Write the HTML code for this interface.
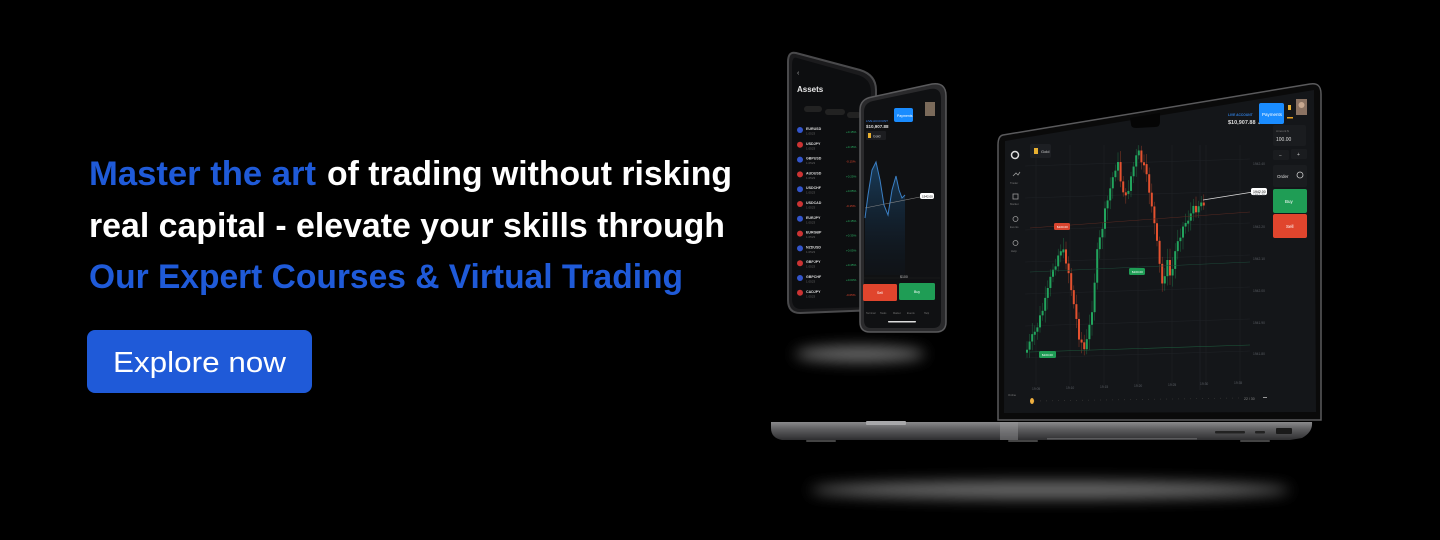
<!DOCTYPE html>
<html><head><meta charset="utf-8"><style>
html,body{margin:0;padding:0;background:#000;}
body{width:1440px;height:540px;overflow:hidden;}
svg{display:block}
</style></head><body>
<svg id="s" width="1440" height="540" viewBox="0 0 1440 540" xmlns="http://www.w3.org/2000/svg" font-family="Liberation Sans, sans-serif">
<defs>
<filter id="bl" x="-50%" y="-200%" width="200%" height="500%"><feGaussianBlur stdDeviation="7"/></filter>
<linearGradient id="base" x1="0" y1="0" x2="0" y2="1"><stop offset="0" stop-color="#8a8a8c"/><stop offset="0.4" stop-color="#5e5e60"/><stop offset="1" stop-color="#2e2e30"/></linearGradient>
<linearGradient id="area" x1="0" y1="0" x2="0" y2="1"><stop offset="0" stop-color="#1d4f7a" stop-opacity="0.7"/><stop offset="1" stop-color="#0f1a26" stop-opacity="0.2"/></linearGradient>
</defs>
<rect width="1440" height="540" fill="#000"/>

<g font-weight="bold" font-size="34">
<text x="89" y="185" fill="#1f5ad8" textLength="227" lengthAdjust="spacingAndGlyphs">Master the art</text>
<text x="327" y="185" fill="#fff" textLength="405" lengthAdjust="spacingAndGlyphs">of trading without risking</text>
<text x="89" y="237" fill="#fff" textLength="636" lengthAdjust="spacingAndGlyphs">real capital - elevate your skills through</text>
<text x="89" y="288" fill="#1f5ad8" textLength="594" lengthAdjust="spacingAndGlyphs">Our Expert Courses &amp; Virtual Trading</text>
</g>
<rect x="87" y="330" width="225" height="63" rx="8" fill="#1f5ad8"/>
<text x="113" y="372" fill="#fff" font-size="29" textLength="173" lengthAdjust="spacingAndGlyphs">Explore now</text>

<ellipse cx="860" cy="354" rx="65" ry="8" fill="#6a6a6a" filter="url(#bl)"/>
<ellipse cx="1050" cy="490" rx="240" ry="9" fill="#6a6a6a" filter="url(#bl)"/>

<!-- phone 1 -->
<path d="M796,53 L860,70 Q876,75 876,90 L876,310 L800,313 Q788,313 788,300 L788,62 Q788,51 796,53 Z" fill="#1b1b1d" stroke="#4a4a4c" stroke-width="2"/>
<path d="M797,58 L858,75 Q871,79 871,92 L871,307 L801,309 Q792,309 792,299 L792,66 Q792,56 797,58 Z" fill="#0d0e10"/>
<text x="797" y="92" fill="#e8e8e8" font-size="8" font-weight="bold">Assets</text>
<text x="797" y="75" fill="#aaa" font-size="7">‹</text>
<g font-size="4" fill="#aaa">
<rect x="804" y="106" width="18" height="6" rx="3" fill="#222"/><rect x="825" y="109" width="20" height="6" rx="3" fill="#222"/><rect x="847" y="112" width="14" height="6" rx="3" fill="#222"/>
</g>
<g id="rows"></g>

<!-- phone 2 -->
<path d="M872,97 L932,84 Q946,82 946,96 L946,322 Q946,332 936,332 L870,332 Q860,332 860,322 L860,110 Q860,99 872,97 Z" fill="#2a2a2c" stroke="#5a5a5c" stroke-width="1.5"/>
<path d="M873,101 L930,89 Q941,87 941,99 L941,320 Q941,328 933,328 L871,328 Q864,328 864,320 L864,112 Q864,103 873,101 Z" fill="#101113"/>
<rect x="894" y="108" width="19" height="14" rx="2" fill="#1a8cff"/>
<text x="897" y="117" fill="#fff" font-size="3.5">Payments</text>
<rect x="925" y="102" width="10" height="14" fill="#7a6a5a"/>
<text x="866" y="122" fill="#3a8cff" font-size="3">LIVE ACCOUNT</text>
<text x="866" y="128" fill="#ddd" font-size="4.5" font-weight="bold">$10,907.88</text>
<rect x="866" y="131" width="20" height="9" rx="1" fill="#1c1d20"/>
<rect x="868" y="133" width="3" height="5" fill="#e8b030"/>
<text x="873" y="137.5" fill="#ccc" font-size="3.5">Gold</text>
<path d="M865,218 L868,195 L872,170 L876,162 L880,180 L884,205 L888,215 L892,190 L896,176 L899,190 L902,198 L905,195 L905,275 L865,275 Z" fill="url(#area)"/>
<path d="M865,218 L868,195 L872,170 L876,162 L880,180 L884,205 L888,215 L892,190 L896,176 L899,190 L902,198 L905,195" fill="none" stroke="#3b7fc4" stroke-width="1"/>
<line x1="865" y1="208" x2="920" y2="197" stroke="#888" stroke-width="0.6"/>
<rect x="920" y="193" width="14" height="6" rx="2" fill="#fff"/>
<text x="922" y="197.5" fill="#000" font-size="3">1942.00</text>
<line x1="864" y1="278" x2="940" y2="278" stroke="#222" stroke-width="0.6"/>
<text x="900" y="278" fill="#bbb" font-size="3.5">$100</text>
<rect x="863" y="284" width="34" height="17" rx="1.5" fill="#e0452d"/>
<rect x="899" y="283" width="36" height="17" rx="1.5" fill="#1f9d55"/>
<text x="877" y="294" fill="#fff" font-size="3.5">Sell</text>
<text x="914" y="293" fill="#fff" font-size="3.5">Buy</text>
<rect x="888" y="321" width="28" height="1.5" rx="0.7" fill="#ddd"/>
<g fill="#777" font-size="2.5"><text x="866" y="314">Terminal</text><text x="880" y="314">Tasks</text><text x="893" y="314">Market</text><text x="907" y="314">Events</text><text x="924" y="314">Help</text></g>

<!-- laptop lid -->
<path d="M1003,135 L1310,84 Q1321,82 1321,94 L1321,420 L998,420 L998,145 Q998,136 1003,135 Z" fill="#0a0a0a" stroke="#5a5a5c" stroke-width="1.5"/>
<path d="M1005,141 L1314,90 L1316,412 L1004,413 Z" fill="#141619"/>
<path d="M1130,118 L1160,113 L1160,122 Q1160,127 1155,127 L1136,128 Q1131,128 1131,124 Z" fill="#050505"/>
<g id="grid" stroke="#1f2226" stroke-width="0.6"></g>
<line x1="1200" y1="145" x2="1200" y2="390" stroke="#22262a" stroke-width="0.6"/>
<g id="candles"></g>
<line x1="1030" y1="352" x2="1250" y2="345" stroke="#1d5a3c" stroke-width="0.6"/>
<line x1="1030" y1="228" x2="1250" y2="212" stroke="#5a2a22" stroke-width="0.5"/>
<line x1="1030" y1="272" x2="1250" y2="262" stroke="#1d4a3a" stroke-width="0.5"/>
<line x1="1203" y1="200" x2="1253" y2="192" stroke="#ddd" stroke-width="0.8"/>
<rect x="1251" y="188" width="16" height="7" rx="2" fill="#fff"/>
<text x="1253" y="193" fill="#000" font-size="3.5">1942.00</text>
<rect x="1054" y="223" width="16" height="7" rx="1.5" fill="#d9452f"/>
<rect x="1129" y="268" width="16" height="7" rx="1.5" fill="#1f9d55"/>
<rect x="1039" y="351" width="17" height="7" rx="1.5" fill="#1f9d55"/>
<g fill="#fff" font-size="3"><text x="1057" y="228">$100.00</text><text x="1132" y="273">$100.00</text><text x="1042" y="356">$100.00</text></g>
<g fill="#5a5e64" font-size="3.3"><text x="1253" y="165">1942.40</text><text x="1253" y="196">1942.30</text><text x="1253" y="228">1942.20</text><text x="1253" y="260">1942.10</text><text x="1253" y="292">1942.00</text><text x="1253" y="324">1941.90</text><text x="1253" y="355">1941.80</text>
<text x="1032" y="390">19:05</text><text x="1066" y="389">19:10</text><text x="1100" y="388">19:15</text><text x="1134" y="387">19:20</text><text x="1168" y="386">19:25</text><text x="1200" y="385">19:30</text><text x="1234" y="384">19:35</text></g>
<line x1="1034" y1="401" x2="1240" y2="398" stroke="#333" stroke-width="0.8" stroke-dasharray="1 5"/>
<ellipse cx="1032" cy="401" rx="2" ry="3" fill="#f0b040"/>
<text x="1244" y="400" fill="#888" font-size="3.5">22 / 30</text>
<rect x="1263" y="397" width="4" height="1" fill="#999"/>
<circle cx="1015" cy="155" r="3.5" fill="none" stroke="#ddd" stroke-width="1.5"/>
<g fill="#777" font-size="2.8"><text x="1010" y="184">Trader</text><text x="1010" y="205">Market</text><text x="1010" y="228">Events</text><text x="1011" y="252">Help</text><text x="1008" y="396">Online</text></g>
<g fill="none" stroke="#999" stroke-width="0.8"><rect x="1013" y="194" width="5" height="5"/><circle cx="1015.5" cy="219" r="2.5"/><circle cx="1015.5" cy="243" r="2.5"/><path d="M1013,176 l3,-3 l2,2 l2,-3"/></g>
<rect x="1030" y="144" width="21" height="14" rx="2" fill="#1d1f23"/>
<rect x="1034" y="148" width="4" height="6" fill="#e8b030"/>
<text x="1041" y="153" fill="#ccc" font-size="4">Gold</text>
<text x="1228" y="116" fill="#2f7fe0" font-size="3.3" font-weight="bold">LIVE ACCOUNT</text>
<text x="1228" y="124" fill="#ddd" font-size="5.5" font-weight="bold">$10,907.88 ⌄</text>
<rect x="1259" y="103" width="25" height="21" rx="2" fill="#1a8cff"/>
<text x="1262" y="116" fill="#fff" font-size="4.5">Payments</text>
<rect x="1288" y="105" width="3" height="5" fill="#e8b030"/><rect x="1287" y="117" width="6" height="1.5" fill="#e8a020"/>
<rect x="1296" y="99" width="11" height="16" fill="#8a7262"/><circle cx="1301.5" cy="105" r="3" fill="#c8a890"/>
<rect x="1273" y="125" width="33" height="21" rx="2" fill="#1a1c1f"/>
<text x="1276" y="132" fill="#777" font-size="3">Amount $</text><text x="1276" y="141" fill="#ddd" font-size="5">100.00</text>
<rect x="1273" y="150" width="16" height="10" rx="1.5" fill="#1a1c1f"/><rect x="1291" y="149" width="16" height="10" rx="1.5" fill="#1a1c1f"/>
<text x="1279" y="157" fill="#ccc" font-size="5">−</text><text x="1297" y="156" fill="#ccc" font-size="5">+</text>
<rect x="1273" y="165" width="34" height="22" rx="2" fill="#1a1c1f"/>
<text x="1277" y="178" fill="#ddd" font-size="4.5">Order</text><circle cx="1300" cy="175" r="3" fill="none" stroke="#ccc" stroke-width="0.8"/>
<rect x="1273" y="189" width="34" height="24" rx="2" fill="#1f9d55"/>
<rect x="1273" y="214" width="34" height="24" rx="2" fill="#e0452d"/>
<text x="1285" y="203" fill="#fff" font-size="4.5">Buy</text><text x="1286" y="228" fill="#fff" font-size="4.5">Sell</text>

<path d="M771,422 L1312,422 Q1313,432 1302,438 L1290,440 L782,440 Q771,438 771,428 Z" fill="url(#base)"/>
<rect x="866" y="421" width="40" height="4" rx="1" fill="#a8a8aa"/>
<rect x="1000" y="422" width="18" height="18" fill="#a0a0a2" opacity="0.4"/>
<rect x="1215" y="431" width="30" height="2.5" rx="1" fill="#222"/>
<rect x="1255" y="431" width="10" height="2.5" rx="1" fill="#222"/>
<rect x="1276" y="428" width="16" height="6" rx="1" fill="#1a1a1a"/>
<rect x="1047" y="438" width="150" height="1.5" fill="#5a5a5c"/>
<rect x="806" y="440" width="30" height="2" rx="1" fill="#444"/><rect x="1008" y="440" width="30" height="2" rx="1" fill="#444"/><rect x="1240" y="440" width="30" height="2" rx="1" fill="#444"/>
</svg>
<script>
(function(){
var NS="http://www.w3.org/2000/svg";
function el(p,t,a){var e=document.createElementNS(NS,t);for(var k in a)e.setAttribute(k,a[k]);p.appendChild(e);return e;}
var g=document.getElementById('grid');
for(var i=0;i<7;i++){var y=162+i*32;el(g,'line',{x1:1025,y1:y+4,x2:1250,y2:y-3});}
for(var j=0;j<7;j++){var x=1036+j*34;el(g,'line',{x1:x,y1:145,x2:x,y2:385});}
var kp=[[1025,352],[1035,330],[1045,300],[1052,268],[1060,248],[1066,262],[1072,300],[1078,335],[1084,352],[1090,318],[1096,255],[1103,218],[1110,185],[1116,160],[1120,182],[1125,198],[1131,172],[1137,152],[1143,168],[1150,198],[1156,245],[1161,285],[1166,262],[1170,280],[1176,240],[1183,225],[1191,212],[1198,204],[1203,200]];
function py(x){for(var i=0;i<kp.length-1;i++){if(x>=kp[i][0]&&x<=kp[i+1][0]){var t=(x-kp[i][0])/(kp[i+1][0]-kp[i][0]);return kp[i][1]+t*(kp[i+1][1]-kp[i][1]);}}return kp[kp.length-1][1];}
var c=document.getElementById('candles');var seed=7;function r(){seed=(seed*9301+49297)%233280;return seed/233280;}
var prev=py(1025);
for(var x=1026;x<=1203;x+=2.6){var y=py(x)+(r()-0.5)*10;var up=y<prev;var top=Math.min(y,prev),bot=Math.max(y,prev);if(bot-top<3)bot=top+3;var col=up?'#22a45d':'#e4512f';
el(c,'line',{x1:x+1,y1:top-4-r()*8,x2:x+1,y2:bot+4+r()*8,stroke:col,'stroke-width':0.5,opacity:0.6});
el(c,'rect',{x:x,y:top,width:2,height:bot-top,fill:col});prev=y;}
var rows=document.getElementById('rows');var names=['EURUSD','USDJPY','GBPUSD','AUDUSD','USDCHF','USDCAD','EURJPY','EURGBP','NZDUSD','GBPJPY','GBPCHF','CADJPY'];
var ch=['+0.15%','+0.15%','-0.15%','+0.25%','+0.05%','-0.15%','+0.15%','+0.35%','+0.05%','+0.45%','+0.03%','-0.05%'];
for(var i=0;i<12;i++){var y=130+i*14.8;el(rows,'circle',{cx:800,cy:y,r:3,fill:i%2?'#c33':'#35c'});
var t=el(rows,'text',{x:806,y:y,fill:'#ddd','font-size':3.6,'font-weight':'bold'});t.textContent=names[i];
var t2=el(rows,'text',{x:806,y:y+4.5,fill:'#666','font-size':3});t2.textContent='1.0523';
var t3=el(rows,'text',{x:846,y:y+3,fill:ch[i][0]=='-'?'#e0452d':'#2ab565','font-size':3});t3.textContent=ch[i];}
})();
</script>
</body></html>
